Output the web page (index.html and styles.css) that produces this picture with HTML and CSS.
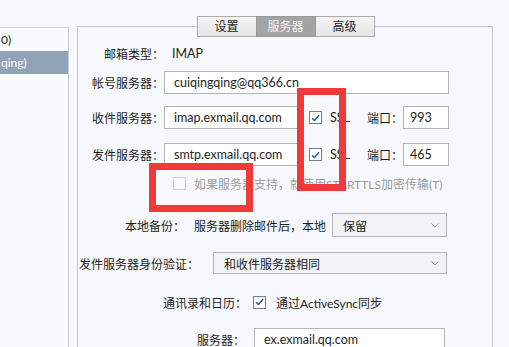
FILE: index.html
```html
<!DOCTYPE html>
<html lang="zh-CN">
<head>
    <meta charset="UTF-8">
    <title>账户设置 - 服务器</title>
    <link rel="stylesheet" href="styles.css">
</head>
<body>
    <div class="window">
        <div class="sidebar">
            <div class="acct">0)</div>
            <div class="acct selected">qing)</div>
        </div>
        <div class="main">
            <div class="tabs">
                <div class="tab">设置</div>
                <div class="tab active">服务器</div>
                <div class="tab">高级</div>
            </div>
            <div class="panel">
                <div class="row r-type">
                    <span class="label std">邮箱类型：</span>
                    <span class="value">IMAP</span>
                </div>
                <div class="row r-account">
                    <span class="label std">帐号服务器：</span>
                    <input class="field f-wide" value="cuiqingqing@qq366.cn">
                </div>
                <div class="row r-in">
                    <span class="label std">收件服务器：</span>
                    <input class="field f-host" value="imap.exmail.qq.com">
                    <span class="check on"><svg width="9" height="8" viewBox="0 0 9 8"><path d="M1 4.2 L3.5 6.5 L8 1.2" fill="none" stroke="#1f5ea8" stroke-width="1.5"/></svg></span>
                    <span class="ssl">SSL</span>
                    <span class="port-label">端口：</span>
                    <input class="field f-port" value="993">
                </div>
                <div class="row r-out">
                    <span class="label std">发件服务器：</span>
                    <input class="field f-host" value="smtp.exmail.qq.com">
                    <span class="check on"><svg width="9" height="8" viewBox="0 0 9 8"><path d="M1 4.2 L3.5 6.5 L8 1.2" fill="none" stroke="#1f5ea8" stroke-width="1.5"/></svg></span>
                    <span class="ssl">SSL</span>
                    <span class="port-label">端口：</span>
                    <input class="field f-port" value="465">
                </div>
                <div class="row r-tls">
                    <span class="check disabled"></span>
                    <span class="muted">如果服务器支持，就使用STARTTLS加密传输(T)</span>
                </div>
                <div class="row r-backup">
                    <span class="label">本地备份：</span>
                    <span class="note">服务器删除邮件后，本地</span>
                    <div class="select s-backup">
                        <span>保留</span>
                        <svg width="8" height="5" viewBox="0 0 8 5"><path d="M0.5 0.5 L4 4 L7.5 0.5" fill="none" stroke="#9a9a9a" stroke-width="1"/></svg>
                    </div>
                </div>
                <div class="row r-auth">
                    <span class="label">发件服务器身份验证：</span>
                    <div class="select s-auth">
                        <span>和收件服务器相同</span>
                        <svg width="8" height="5" viewBox="0 0 8 5"><path d="M0.5 0.5 L4 4 L7.5 0.5" fill="none" stroke="#9a9a9a" stroke-width="1"/></svg>
                    </div>
                </div>
                <div class="row r-sync">
                    <span class="label">通讯录和日历：</span>
                    <span class="check on"><svg width="9" height="8" viewBox="0 0 9 8"><path d="M1 4.2 L3.5 6.5 L8 1.2" fill="none" stroke="#1f5ea8" stroke-width="1.5"/></svg></span>
                    <span class="sync-text">通过ActiveSync同步</span>
                </div>
                <div class="row r-server">
                    <span class="label">服务器：</span>
                    <input class="field f-server" value="ex.exmail.qq.com">
                </div>
            </div>
        </div>
        <div class="mark mark-ssl"></div>
        <div class="mark mark-tls"></div>
    </div>
</body>
</html>
```
FILE: styles.css
```css
body {
    margin: 0;
    background-color: #f7f8fc;
    font-family: "Lato", "Noto Sans CJK SC", sans-serif;
    font-size: 12px;
    color: #1e1e1e;
}
.window {
    position: relative;
    display: flex;
    width: 509px;
    height: 347px;
    overflow: hidden;
}
.sidebar {
    width: 68px;
    margin-top: 27px;
    border-top: 1px solid #d3d6da;
    border-right: 1px solid #c9ccd0;
    background-color: #fafbfd;
    flex-shrink: 0;
}
.acct {
    height: 23px;
    line-height: 23px;
    padding-left: 1px;
    white-space: nowrap;
    overflow: hidden;
}
.acct.selected {
    background-color: #8fa2b6;
    color: #ffffff;
}
.main {
    margin-left: 8px;
    margin-top: 16px;
    width: 416px;
    flex-shrink: 0;
}
.tabs {
    position: relative;
    z-index: 1;
    display: flex;
    justify-content: center;
    height: 21px;
    padding-left: 2px;
}
.tab {
    width: 58px;
    height: 19px;
    line-height: 19px;
    border: 1px solid #acacac;
    margin-left: -1px;
    text-align: center;
    background: linear-gradient(#f4f4f4, #e6e6e6);
    color: #1e1e1e;
}
.tab.active {
    background: #a3a3a3;
    border-color: #9a9a9a;
    color: #f4f4f4;
    z-index: 1;
}
.panel {
    margin-top: -11px;
    height: 340px;
    border: 1px solid #c5c7cb;
    border-bottom: none;
    padding-top: 18px;
    box-sizing: border-box;
}
.row {
    display: flex;
    align-items: center;
    white-space: nowrap;
}
.label {
    flex-shrink: 0;
}
.label.std {
    width: 86px;
    text-align: right;
}
.value {
    padding-left: 8px;
    font-size: 12.5px;
}
.field {
    height: 23px;
    box-sizing: border-box;
    border: 1px solid #b3b5b9;
    background-color: #ffffff;
    font-family: inherit;
    font-size: 12.5px;
    color: #1e1e1e;
    padding: 0 6px 0 9px;
    margin: 0;
    outline: none;
}
.f-wide {
    width: 285px;
}
.f-host {
    width: 134px;
}
.f-port {
    width: 46px;
    padding: 0 6px;
}
.f-server {
    width: 191px;
    margin-left: 9px;
}
.check {
    width: 13px;
    height: 13px;
    box-sizing: border-box;
    border: 1px solid #6f7f96;
    background-color: #ffffff;
    display: flex;
    align-items: center;
    justify-content: center;
    flex-shrink: 0;
}
.check.disabled {
    border-color: #c9cbce;
    background-color: #fbfbfb;
}
.r-in .check,
.r-out .check {
    margin-left: 11px;
}
.ssl {
    width: 37px;
    margin-left: 8px;
    font-size: 12.5px;
}
.port-label {
    width: 36px;
}
.muted {
    color: #9c9c9c;
    margin-left: 8px;
}
.r-type {
    height: 16px;
}
.r-account {
    margin-top: 10px;
}
.r-in {
    margin-top: 12px;
}
.r-out {
    margin-top: 14px;
}
.r-tls {
    margin-top: 11px;
    height: 13px;
    padding-left: 95px;
}
.r-backup {
    margin-top: 23px;
    padding-left: 47px;
}
.note {
    margin-left: 9px;
    width: 132px;
}
.select {
    display: flex;
    align-items: center;
    justify-content: space-between;
    box-sizing: border-box;
    border: 1px solid #b3b5b9;
    background-color: #f2f3f5;
    padding: 0 7px 0 10px;
}
.s-backup {
    width: 115px;
    height: 24px;
    margin-left: 6px;
}
.r-auth {
    margin-top: 15px;
    padding-left: 1px;
}
.r-auth .label {
    width: 120px;
}
.s-auth {
    width: 234px;
    height: 22px;
    margin-left: 14px;
}
.r-sync {
    margin-top: 21px;
    height: 14px;
    padding-left: 85px;
}
.r-sync .label {
    width: 84px;
}
.r-sync .check {
    margin-left: 6px;
}
.sync-text {
    margin-left: 10px;
}
.r-server {
    margin-top: 19px;
    padding-left: 119px;
}
.r-server .label {
    width: 48px;
}
.mark {
    position: absolute;
    border: 7px solid #ef3a3a;
    box-sizing: border-box;
}
.mark-ssl {
    left: 297px;
    top: 88px;
    width: 49px;
    height: 103px;
}
.mark-tls {
    left: 149px;
    top: 163px;
    width: 104px;
    height: 49px;
}
```
